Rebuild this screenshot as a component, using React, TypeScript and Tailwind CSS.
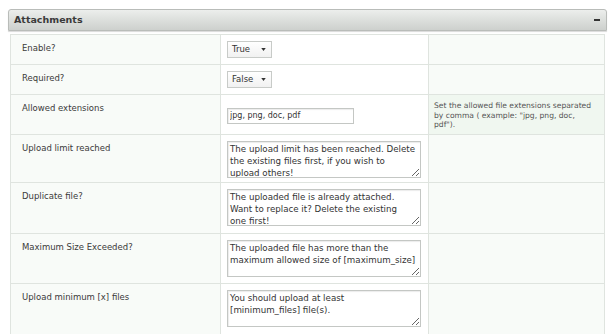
import React from "react"

const font = { fontFamily: '"DejaVu Sans", Verdana, sans-serif' }

type Row = {
  label: string
  kind: "select" | "input" | "textarea"
  value: string
  help?: string[]
  rowClass: string
}

const ROWS: Row[] = [
  { label: "Enable?", kind: "select", value: "True", rowClass: "h-[30px]" },
  { label: "Required?", kind: "select", value: "False", rowClass: "h-[30px]" },
  {
    label: "Allowed extensions",
    kind: "input",
    value: "jpg, png, doc, pdf",
    help: ["Set the allowed file extensions separated", 'by comma ( example: "jpg, png, doc,', 'pdf").'],
    rowClass: "h-[40px]",
  },
  {
    label: "Upload limit reached",
    kind: "textarea",
    value: "The upload limit has been reached. Delete\nthe existing files first, if you wish to\nupload others!",
    rowClass: "h-[48px]",
  },
  {
    label: "Duplicate file?",
    kind: "textarea",
    value: "The uploaded file is already attached.\nWant to replace it? Delete the existing\none first!",
    rowClass: "h-[51px]",
  },
  {
    label: "Maximum Size Exceeded?",
    kind: "textarea",
    value: "The uploaded file has more than the\nmaximum allowed size of [maximum_size]",
    rowClass: "h-[50px]",
  },
  {
    label: "Upload minimum [x] files",
    kind: "textarea",
    value: "You should upload at least\n[minimum_files] file(s).",
    rowClass: "h-[52px]",
  },
]

function FakeSelect({ value }: { value: string }) {
  return (
    <div className="flex h-[17px] w-[45px] items-center justify-between border border-[#c8cbc8] bg-gradient-to-b from-white to-[#f1f1f1] pl-[4px] pr-[5px] text-[8.5px] text-[#333]">
      <span>{value}</span>
      <svg width="5" height="3" viewBox="0 0 6 4">
        <path d="M0 0h6L3 4z" fill="#333" />
      </svg>
    </div>
  )
}

function Control({ row }: { row: Row }) {
  if (row.kind === "select") return <FakeSelect value={row.value} />
  if (row.kind === "input")
    return (
      <input
        readOnly
        value={row.value}
        style={font}
        className="h-[16px] w-[127px] border border-[#c4c7c4] bg-white px-[2px] text-[8px] text-[#333] shadow-[inset_1px_1px_1px_rgba(0,0,0,0.08)] outline-none"
      />
    )
  return (
    <textarea
      readOnly
      value={row.value}
      style={font}
      className="block h-[37px] w-[194px] resize overflow-hidden border border-[#c4c7c4] bg-white py-[1px] pl-[2px] pr-[1px] text-[8.7px] leading-[12px] text-[#333] shadow-[inset_1px_1px_1px_rgba(0,0,0,0.08)] outline-none"
    />
  )
}

export default function App() {
  return (
    <div className="h-[334px] w-[615px] overflow-hidden bg-white pt-[9px]" style={font}>
      {/* Panel Header */}
      <div className="mx-[8px] flex h-[22px] items-center justify-between rounded-t-[3px] border border-[#b9bcb9] bg-gradient-to-b from-[#eceeec] to-[#cdd0cd] pl-[5px] pr-[6px] shadow-[0_1px_1px_rgba(0,0,0,0.15)]">
        <span className="text-[9.5px] font-bold text-[#3a3a3a]">Attachments</span>
        <span className="block h-[2px] w-[6px] bg-[#333]" />
      </div>

      {/* Settings Table */}
      <div className="mx-[10px] mt-[3px] border-l border-r border-t border-[#dfe4df]">
        {ROWS.map((row) => (
          <div
            key={row.label}
            className={`grid grid-cols-[209px_208px_1fr] border-b border-[#dfe4df] ${row.rowClass}`}
          >
            <div className="bg-[#f8fbf8] pl-[11px] pt-[7px] text-[8.5px] leading-[12px] text-[#3a3a3a]">
              {row.label}
            </div>
            <div className="border-l border-[#dfe4df] bg-white pl-[6px] pt-[6px]">
              <Control row={row} />
            </div>
            <div
              className={`overflow-hidden border-l border-[#dfe4df] pl-[5px] pt-[6px] text-[7.6px] leading-[9.5px] text-[#555] ${
                row.help ? "bg-[#f0f7f0]" : "bg-[#f8fbf8]"
              }`}
            >
              {row.help?.map((line) => (
                <div key={line} className="whitespace-nowrap">
                  {line}
                </div>
              ))}
            </div>
          </div>
        ))}
      </div>
    </div>
  )
}
